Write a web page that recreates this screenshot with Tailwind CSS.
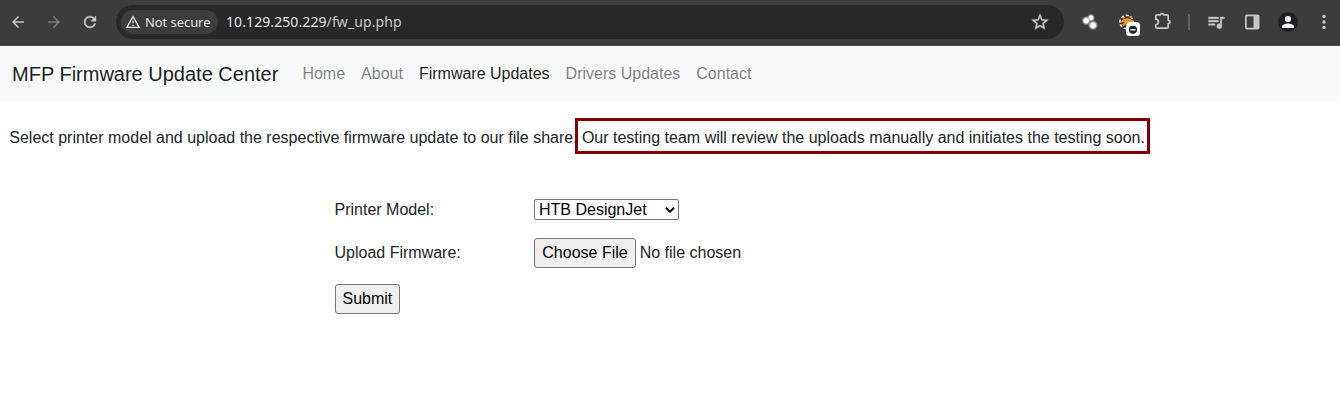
<!DOCTYPE html>
<html lang="en">
<head>
<meta charset="utf-8">
<title>MFP Firmware Update Center</title>
<script src="https://cdn.jsdelivr.net/npm/@tailwindcss/browser@4"></script>
</head>
<body class="h-[411px] overflow-hidden bg-white font-['Liberation_Sans',Arial,sans-serif] text-base text-[#212529]">
  <!-- Browser toolbar -->
  <header class="flex h-[46px] items-start border-b border-[#484848] bg-[#3c3c3c] pt-[5px] font-['Noto_Sans',sans-serif] text-[#c7c7c7]">
    <div class="flex h-[34px] w-[116px] shrink-0 items-center gap-[18px] pl-[9px]">
      <svg class="size-[18px] shrink-0" viewBox="0 0 24 24" fill="currentColor"><path d="M20 11H7.83l5.59-5.59L12 4l-8 8 8 8 1.41-1.41L7.83 13H20z"/></svg>
      <svg class="size-[18px] shrink-0 text-[#7c7c7c]" viewBox="0 0 24 24" fill="currentColor"><path d="M12 4l-1.41 1.41L16.17 11H4v2h12.17l-5.58 5.59L12 20l8-8z"/></svg>
      <svg class="size-[18px] shrink-0" viewBox="0 0 24 24" fill="currentColor" stroke="currentColor" stroke-width=".5"><path d="M17.65 6.35A7.96 7.96 0 0 0 12 4a8 8 0 1 0 7.73 10h-2.08A6 6 0 1 1 12 6c1.66 0 3.14.69 4.22 1.78L13 11h7V4z"/></svg>
    </div>
    <div class="flex h-[34px] w-[948px] shrink-0 items-center rounded-full bg-[#282828] pl-[5px] pr-[14px]">
      <div class="flex h-6 w-[97px] items-center rounded-full bg-[#3c3c3c] pl-[4px] text-[13px] text-[#e3e3e3]">
        <svg class="mr-[4px] size-4 shrink-0" viewBox="0 0 24 24" fill="currentColor"><path d="M12 5.99 19.53 19H4.47L12 5.99M12 2 1 21h22L12 2zm1 14h-2v2h2v-2zm0-6h-2v4h2v-4z"/></svg>
        <span class="whitespace-nowrap pt-px tracking-[-0.07px]">Not secure</span>
      </div>
      <div class="ml-2 flex-1 pb-[2px] text-[14px] tracking-[0.09px] text-[#c7c7c7]"><span class="text-[#e3e3e3]">10.129.250.229</span>/fw_up.php</div>
      <svg class="size-5" viewBox="0 0 24 24" fill="currentColor"><path d="m22 9.24-7.19-.62L12 2 9.19 8.63 2 9.24l5.46 4.73L5.82 21 12 17.27 18.18 21l-1.63-7.03zM12 15.4l-3.76 2.27 1-4.28-3.32-2.88 4.38-.38L12 6.1l1.71 4.04 4.38.38-3.32 2.88 1 4.28z" stroke="currentColor" stroke-width=".4"/></svg>
    </div>
    <div class="flex h-[34px] flex-1 items-center">
      <svg class="ml-[16px] h-[34px] w-[20px] shrink-0" viewBox="1080 5 20 34">
        <defs><radialGradient id="ball"><stop offset=".45" stop-color="#fff"/><stop offset="1" stop-color="#999" stop-opacity=".1"/></radialGradient></defs>
        <circle cx="1091" cy="17.8" r="4.1" fill="url(#ball)"/><circle cx="1086.200" cy="20.700" r="4.8" fill="url(#ball)"/><circle cx="1093" cy="25.3" r="5.2" fill="url(#ball)"/>
      </svg>
      <svg class="ml-[18px] h-[34px] w-[24px] shrink-0" viewBox="1118 5 24 34">
        <circle cx="1126.500" cy="22" r="6" fill="#2d2925"/>
        <circle cx="1126.500" cy="22" r="6.600" fill="none" stroke="#f3eee6" stroke-width="1.600" stroke-dasharray="3.2 1.8"/>
        <path d="M1120.500 23C1121 20 1125 17.500 1129 18.500L1133.500 20.500 1133 22.500 1127.500 22.500 1123.500 26.500 1122 24.500 1125 22Z" fill="#ef941c"/>
        <path d="M1122.500 18.500l2-1.500M1129.500 16.500l2.500 1.500" stroke="#f5a337" stroke-width="1.500" fill="none"/>
        <rect x="1126" y="22" width="14" height="14" rx="3.500" fill="#fff"/><circle cx="1133" cy="29.800" r="4.100" fill="#25282c"/><path d="M1130.500 29.800h5" stroke="#fff" stroke-width="1.400"/>
      </svg>
      <svg class="ml-[10px] h-[34px] w-[22px] shrink-0" viewBox="1152 5 22 34"><path d="M1157 14.800H1160.300C1160.700 13.300 1163.300 13.300 1163.700 14.800H1167Q1168.200 14.800 1168.200 16V20.300C1170.600 20.600 1170.600 23.400 1168.200 23.700V27Q1168.200 28.200 1167 28.200H1157Q1155.800 28.200 1155.800 27V24.800C1159.300 24 1159.300 20 1155.800 19.200V16Q1155.800 14.800 1157 14.800Z" fill="none" stroke="currentColor" stroke-width="1.700" stroke-linejoin="round"/></svg>
      <div class="ml-[14px] h-4 w-[2px] bg-[#606060]"></div>
      <svg class="ml-[16px] size-5 shrink-0" viewBox="0 0 24 24" fill="currentColor" stroke="currentColor" stroke-width=".4"><path d="M15 6H3v2h12V6zm0 4H3v2h12v-2zM3 16h8v-2H3v2zM17 6v8.180A3 3 0 1 0 19 17V8h3V6h-5z"/></svg>
      <svg class="ml-[16px] h-[34px] w-[20px] shrink-0" viewBox="1242 5 20 34"><rect x="1245.900" y="15.400" width="12.700" height="13.200" rx="1" fill="none" stroke="currentColor" stroke-width="1.700"/><path d="M1253.500 15h5v14h-5z" fill="currentColor"/></svg>
      <svg class="ml-[16px] size-5 shrink-0" viewBox="0 0 20 20"><circle cx="10" cy="10" r="10" fill="#202124"/><circle cx="10" cy="7" r="3.100" fill="#fff"/><path d="M4 16v-1.500C4 12.500 8 11.500 10 11.500s6 1 6 3V16z" fill="#fff"/></svg>
      <svg class="ml-[16px] size-5 shrink-0" viewBox="0 0 20 20" fill="currentColor"><circle cx="10" cy="4.500" r="1.700"/><circle cx="10" cy="10" r="1.700"/><circle cx="10" cy="15.500" r="1.700"/></svg>
    </div>
  </header>

  <nav class="flex h-14 items-center bg-[#f8f9fa] pl-3">
    <a class="mr-4 text-xl leading-[30px] text-black/90">MFP Firmware Update Center</a>
    <div class="flex text-black/50">
      <a class="px-2">Home</a><a class="px-2">About</a><a class="px-2 text-black/90">Firmware Updates</a><a class="px-2">Drivers Updates</a><a class="px-2">Contact</a>
    </div>
  </nav>

  <main>
    <p class="flex items-center whitespace-nowrap pl-[9.3px] pt-[16px]">
      <span class="pt-[3px]">Select printer model and upload the respective firmware update to our file share.</span>
      <span class="-ml-[3px] flex h-[36px] w-[575px] items-center border-3 border-[#800000] bg-white pl-[4.3px] pt-[3px]">Our testing team will review the uploads manually and initiates the testing soon.</span>
    </p>
    <form class="ml-[334.5px] mt-[45px]">
      <div class="flex h-[21px] items-center">
        <label class="w-[199.5px]">Printer Model:</label>
        <div class="flex h-[21px] w-[145px] items-center justify-between rounded-[2px] border border-[#767676] bg-white pl-1 pr-[3px] text-black">
          <span class="leading-[19px]">HTB DesignJet</span>
          <svg class="h-[6px] w-[10px]" viewBox="0 0 10 6"><path d="M1 .8 5 4.700 9 .8" fill="none" stroke="#000" stroke-width="2"/></svg>
        </div>
      </div>
      <div class="mt-[18px] flex h-[30px] items-center">
        <label class="w-[199.5px]">Upload Firmware:</label>
        <button type="button" class="mr-[3.700px] h-[30px] w-[102px] whitespace-nowrap rounded-[3px] border border-[#767676] bg-[#efefef] text-black">Choose File</button>
        <span>No file chosen</span>
      </div>
      <button type="button" class="ml-[0.4px] mt-4 h-[30px] w-[65px] rounded-[3px] border border-[#767676] bg-[#efefef] text-black">Submit</button>
    </form>
  </main>
</body>
</html>
